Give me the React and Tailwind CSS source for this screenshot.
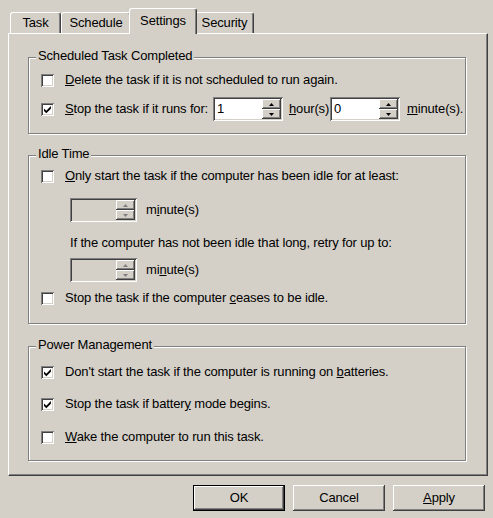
const sunken =
  "shadow-[inset_1px_1px_#808080,inset_-1px_-1px_#ffffff,inset_2px_2px_#404040,inset_-2px_-2px_#d4d0c8]"
const raised =
  "shadow-[inset_-1px_-1px_#404040,inset_1px_1px_#ffffff,inset_-2px_-2px_#808080,inset_2px_2px_#d4d0c8]"

function Check({ checked }) {
  return (
    <span className={"flex-none w-[13px] h-[13px] bg-white " + sunken}>
      {checked && (
        <svg width="13" height="13" viewBox="0 0 13 13" className="block">
          <path d="M3 5.4 L5.3 7.7 L9.9 3.1 V5.7 L5.3 10.3 L3 8 Z" fill="#000" />
        </svg>
      )}
    </span>
  )
}

function Row({ checked, children, className = "" }) {
  return (
    <div className={"flex items-center h-[20px] " + className}>
      <Check checked={checked} />
      <span className="ml-[11px]">{children}</span>
    </div>
  )
}

function SpinBtn({ up, disabled }) {
  return (
    <div className={"flex-1 flex items-center justify-center bg-[#d4d0c8] " + raised}>
      <svg width="5" height="3" viewBox="0 0 5 3" className="block">
        <path d={up ? "M2.5 0 L5 3 L0 3 Z" : "M0 0 L5 0 L2.5 3 Z"} fill={disabled ? "#808080" : "#000"} />
      </svg>
    </div>
  )
}

function Spinner({ value, disabled, className = "" }) {
  return (
    <div
      className={
        "flex flex-none h-[24px] p-[2px] " +
        sunken +
        " " +
        (disabled ? "bg-[#d4d0c8] " : "bg-white ") +
        className
      }>
      <div className="flex-1 pl-[2px] leading-[20px]">{value}</div>
      <div className="flex flex-col w-[19px]">
        <SpinBtn up disabled={disabled} />
        <SpinBtn disabled={disabled} />
      </div>
    </div>
  )
}

function Group({ title, className = "", children }) {
  return (
    <div
      className={
        "relative ml-[19px] w-[438px] border border-[#808080] shadow-[1px_1px_0_#ffffff,inset_1px_1px_0_#ffffff] " +
        className
      }>
      <span className="absolute left-[7px] top-[-10px] px-[2px] bg-[#d4d0c8] leading-[16px]">
        {title}
      </span>
      {children}
    </div>
  )
}

function Tab({ selected, className = "", children }) {
  if (selected) {
    return (
      <div
        className={
          "relative z-10 -mx-[2px] -mb-[1px] h-[26px] flex items-center justify-center pb-[1px] bg-[#d4d0c8] border-t border-l border-white border-r border-r-[#404040] rounded-t-[3px] shadow-[inset_-1px_0_#808080] " +
          className
        }>
        {children}
      </div>
    )
  }
  return (
    <div
      className={
        "h-[21px] flex items-center justify-center border-t border-l border-white border-r border-r-[#404040] rounded-t-[3px] shadow-[inset_-1px_0_#808080] " +
        className
      }>
      {children}
    </div>
  )
}

function Button({ def, children }) {
  return (
    <div
      className={
        "w-[92px] h-[26px] flex items-center justify-center bg-[#d4d0c8] " +
        (def ? "border border-black " : "") +
        raised
      }>
      {children}
    </div>
  )
}

export default function App() {
  return (
    <div className="w-[493px] h-[518px] bg-[#d4d0c8] text-black pt-[8px] px-[8px] font-['Liberation_Sans',Arial,sans-serif] text-[13px] tracking-[-0.15px] select-none">
      <div className="flex items-end h-[25px] pl-[2px]">
        <Tab className="w-[51px]">Task</Tab>
        <Tab className="w-[70px]">Schedule</Tab>
        <Tab selected className="w-[68px]">Settings</Tab>
        <Tab className="w-[59px]">Security</Tab>
      </div>
      <div className="w-[480px] h-[443px] bg-[#d4d0c8] border-t border-l border-white border-r border-b border-r-[#404040] border-b-[#404040] shadow-[inset_-1px_-1px_#808080] pt-[23px]">
        <Group title="Scheduled Task Completed" className="h-[77px] pl-[12px] pt-[12px]">
          <Row>
            <u>D</u>elete the task if it is not scheduled to run again.
          </Row>
          <div className="flex items-center h-[24px] mt-[7px]">
            <Check checked />
            <span className="ml-[11px] w-[148px]">
              <u>S</u>top the task if it runs for:
            </span>
            <Spinner value="1" className="w-[70px]" />
            <span className="ml-[6px] w-[41px]">
              <u>h</u>our(s)
            </span>
            <Spinner value="0" className="w-[70px]" />
            <span className="ml-[7px]">
              <u>m</u>inute(s).
            </span>
          </div>
        </Group>
        <Group title="Idle Time" className="mt-[21px] h-[169px] pl-[12px] pt-[10px]">
          <Row>
            <u>O</u>nly start the task if the computer has been idle for at least:
          </Row>
          <div className="flex items-center mt-[12px] ml-[29px]">
            <Spinner disabled className="w-[67px]" />
            <span className="ml-[9px]">
              m<u>i</u>nute(s)
            </span>
          </div>
          <div className="h-[20px] leading-[20px] mt-[11px] ml-[29px]">
            If the computer has not been idle that long, retry for up to:
          </div>
          <div className="flex items-center mt-[5px] ml-[29px]">
            <Spinner disabled className="w-[67px]" />
            <span className="ml-[9px]">
              mi<u>n</u>ute(s)
            </span>
          </div>
          <Row className="mt-[6px]">
            Stop the task if the computer <u>c</u>eases to be idle.
          </Row>
        </Group>
        <Group title="Power Management" className="mt-[22px] h-[115px] pl-[12px] pt-[15px]">
          <Row checked>
            Don't start the task if the computer is running on <u>b</u>atteries.
          </Row>
          <Row checked className="mt-[12px]">
            Stop the task if batter<u>y</u> mode begins.
          </Row>
          <Row className="mt-[13px]">
            <u>W</u>ake the computer to run this task.
          </Row>
        </Group>
      </div>
      <div className="flex justify-end gap-[8px] mt-[9px]">
        <Button def>OK</Button>
        <Button>Cancel</Button>
        <Button>
          <span>
            <u>A</u>pply
          </span>
        </Button>
      </div>
    </div>
  )
}
